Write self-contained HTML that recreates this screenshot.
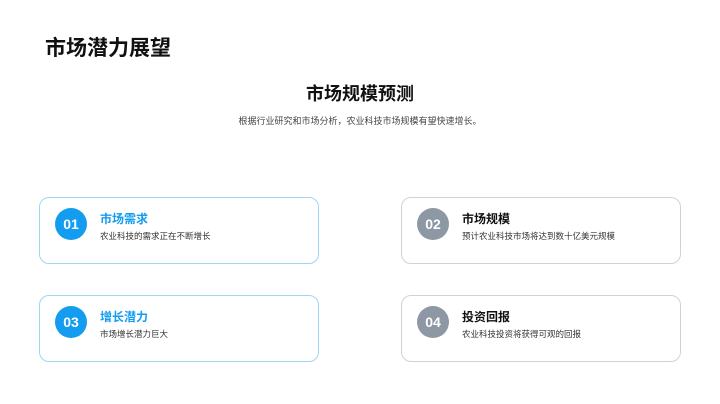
<!DOCTYPE html>
<html><head><meta charset="utf-8"><style>
body{margin:0;width:720px;height:404px;background:#fff;font-family:"Liberation Sans","Noto Sans CJK SC",sans-serif;position:relative;overflow:hidden}
.a{position:absolute}
.h1{left:45px;top:32px;font-size:21px;font-weight:bold;color:#111}
.h2{left:0;width:720px;text-align:center;top:80px;font-size:18px;font-weight:bold;color:#111}
.sub{left:0;width:720px;text-align:center;top:114px;font-size:9px;color:#444}
.card{width:280px;height:67px;border:1px solid #9fd6f5;border-radius:10px;box-sizing:border-box}
.g{border-color:#cfd3d8}
.c{width:32px;height:32px;border-radius:50%;background:#149cf0;color:#fff;font-weight:bold;font-size:14px;line-height:32px;text-align:center;left:15px;top:10px}
.g .c{background:#8e98a5}
.t{left:60px;top:12px;font-size:12px;font-weight:bold;color:#149cf0}
.g .t{color:#111}
.d{left:60px;top:32px;font-size:8.5px;color:#333}
</style></head><body>
<div class="a h1">市场潜力展望</div>
<div class="a h2">市场规模预测</div>
<div class="a sub">根据行业研究和市场分析，农业科技市场规模有望快速增长。</div>
<div class="a card" style="left:39px;top:197px"><div class="a c">01</div><div class="a t">市场需求</div><div class="a d">农业科技的需求正在不断增长</div></div>
<div class="a card g" style="left:401px;top:197px"><div class="a c">02</div><div class="a t">市场规模</div><div class="a d">预计农业科技市场将达到数十亿美元规模</div></div>
<div class="a card" style="left:39px;top:295px"><div class="a c">03</div><div class="a t">增长潜力</div><div class="a d">市场增长潜力巨大</div></div>
<div class="a card g" style="left:401px;top:295px"><div class="a c">04</div><div class="a t">投资回报</div><div class="a d">农业科技投资将获得可观的回报</div></div>
</body></html>
